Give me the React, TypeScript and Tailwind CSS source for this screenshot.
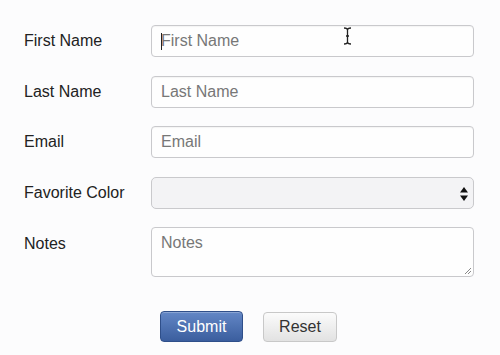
import React from "react";

const FONT = { fontFamily: '"Liberation Sans", Arial, sans-serif' };

const inputCls =
  "w-[323px] h-[32px] rounded-[4px] border border-[#c9c9cc] bg-[#fefefe] px-[9px] text-[16px] text-[#333] placeholder:text-[#777] outline-none shadow-[inset_0_1px_1px_rgba(0,0,0,0.04)]";

const Row = ({ label, children, top = false }: { label: string; children: React.ReactNode; top?: boolean }) => (
  <div className={`flex ${top ? "items-start" : "items-center"}`}>
    <label className={`w-[127px] text-[16px] text-[#222] ${top ? "pt-[5px]" : ""}`}>{label}</label>
    {children}
  </div>
);

export default function App() {
  return (
    <div className="relative w-[500px] h-[355px] bg-[#fcfcfd] overflow-hidden" style={FONT}>
      <form className="flex flex-col pl-[24px] pt-[25px]" onSubmit={(e) => e.preventDefault()}>
        <Row label="First Name">
          <div className="relative">
            <input className={inputCls} placeholder="First Name" style={FONT} />
            <span className="absolute left-[10px] top-[8px] w-[1px] h-[17px] bg-[#222]" />
          </div>
        </Row>
        <div className="h-[19px]" />
        <Row label="Last Name">
          <input className={inputCls} placeholder="Last Name" style={FONT} />
        </Row>
        <div className="h-[18px]" />
        <Row label="Email">
          <input className={inputCls} placeholder="Email" style={FONT} />
        </Row>
        <div className="h-[19px]" />
        <Row label="Favorite Color">
          <div className="relative w-[323px] h-[32px] rounded-[5px] border border-[#c9c9cc] bg-[#f3f3f5]">
            <svg className="absolute right-[4px] top-[8px]" width="10" height="16" viewBox="0 0 10 16">
              <path d="M5 1 L9 6.5 H1 Z" fill="#111" />
              <path d="M5 15 L9 9.5 H1 Z" fill="#111" />
            </svg>
          </div>
        </Row>
        <div className="h-[18px]" />
        <Row label="Notes" top>
          <div className="relative">
            <textarea
              className="block w-[323px] h-[50px] resize-none rounded-[4px] border border-[#c9c9cc] bg-[#fefefe] px-[9px] pt-[5px] text-[16px] leading-[20px] text-[#333] placeholder:text-[#777] outline-none"
              placeholder="Notes"
              style={FONT}
            />
            <svg className="absolute right-[2px] bottom-[2px]" width="8" height="8" viewBox="0 0 8 8">
              <path d="M7 1 L1 7 M7 4 L4 7" stroke="#888" strokeWidth="1" />
            </svg>
          </div>
        </Row>
        <div className="flex items-center pl-[136px] pt-[34px] gap-[20px]">
          <button
            type="submit"
            className="w-[83px] h-[31px] rounded-[4px] border border-[#2f4f8a] bg-gradient-to-b from-[#6387c6] to-[#3b5e9e] text-[16px] text-white shadow-[inset_0_1px_0_rgba(255,255,255,0.25)]"
            style={FONT}
          >
            Submit
          </button>
          <button
            type="reset"
            className="w-[74px] h-[30px] rounded-[4px] border border-[#c8c8c8] bg-gradient-to-b from-[#fbfbfb] to-[#e2e2e2] text-[16px] text-[#333]"
            style={FONT}
          >
            Reset
          </button>
        </div>
      </form>
      <svg className="absolute left-[343px] top-[27px]" width="9" height="18" viewBox="0 0 9 18">
        <path d="M1 1 Q4.5 1 4.5 3 V15 Q4.5 17 1 17 M8 1 Q4.5 1 4.5 3 M8 17 Q4.5 17 4.5 15 M3 9 H6" stroke="#222" strokeWidth="1.3" fill="none" />
      </svg>
    </div>
  );
}
